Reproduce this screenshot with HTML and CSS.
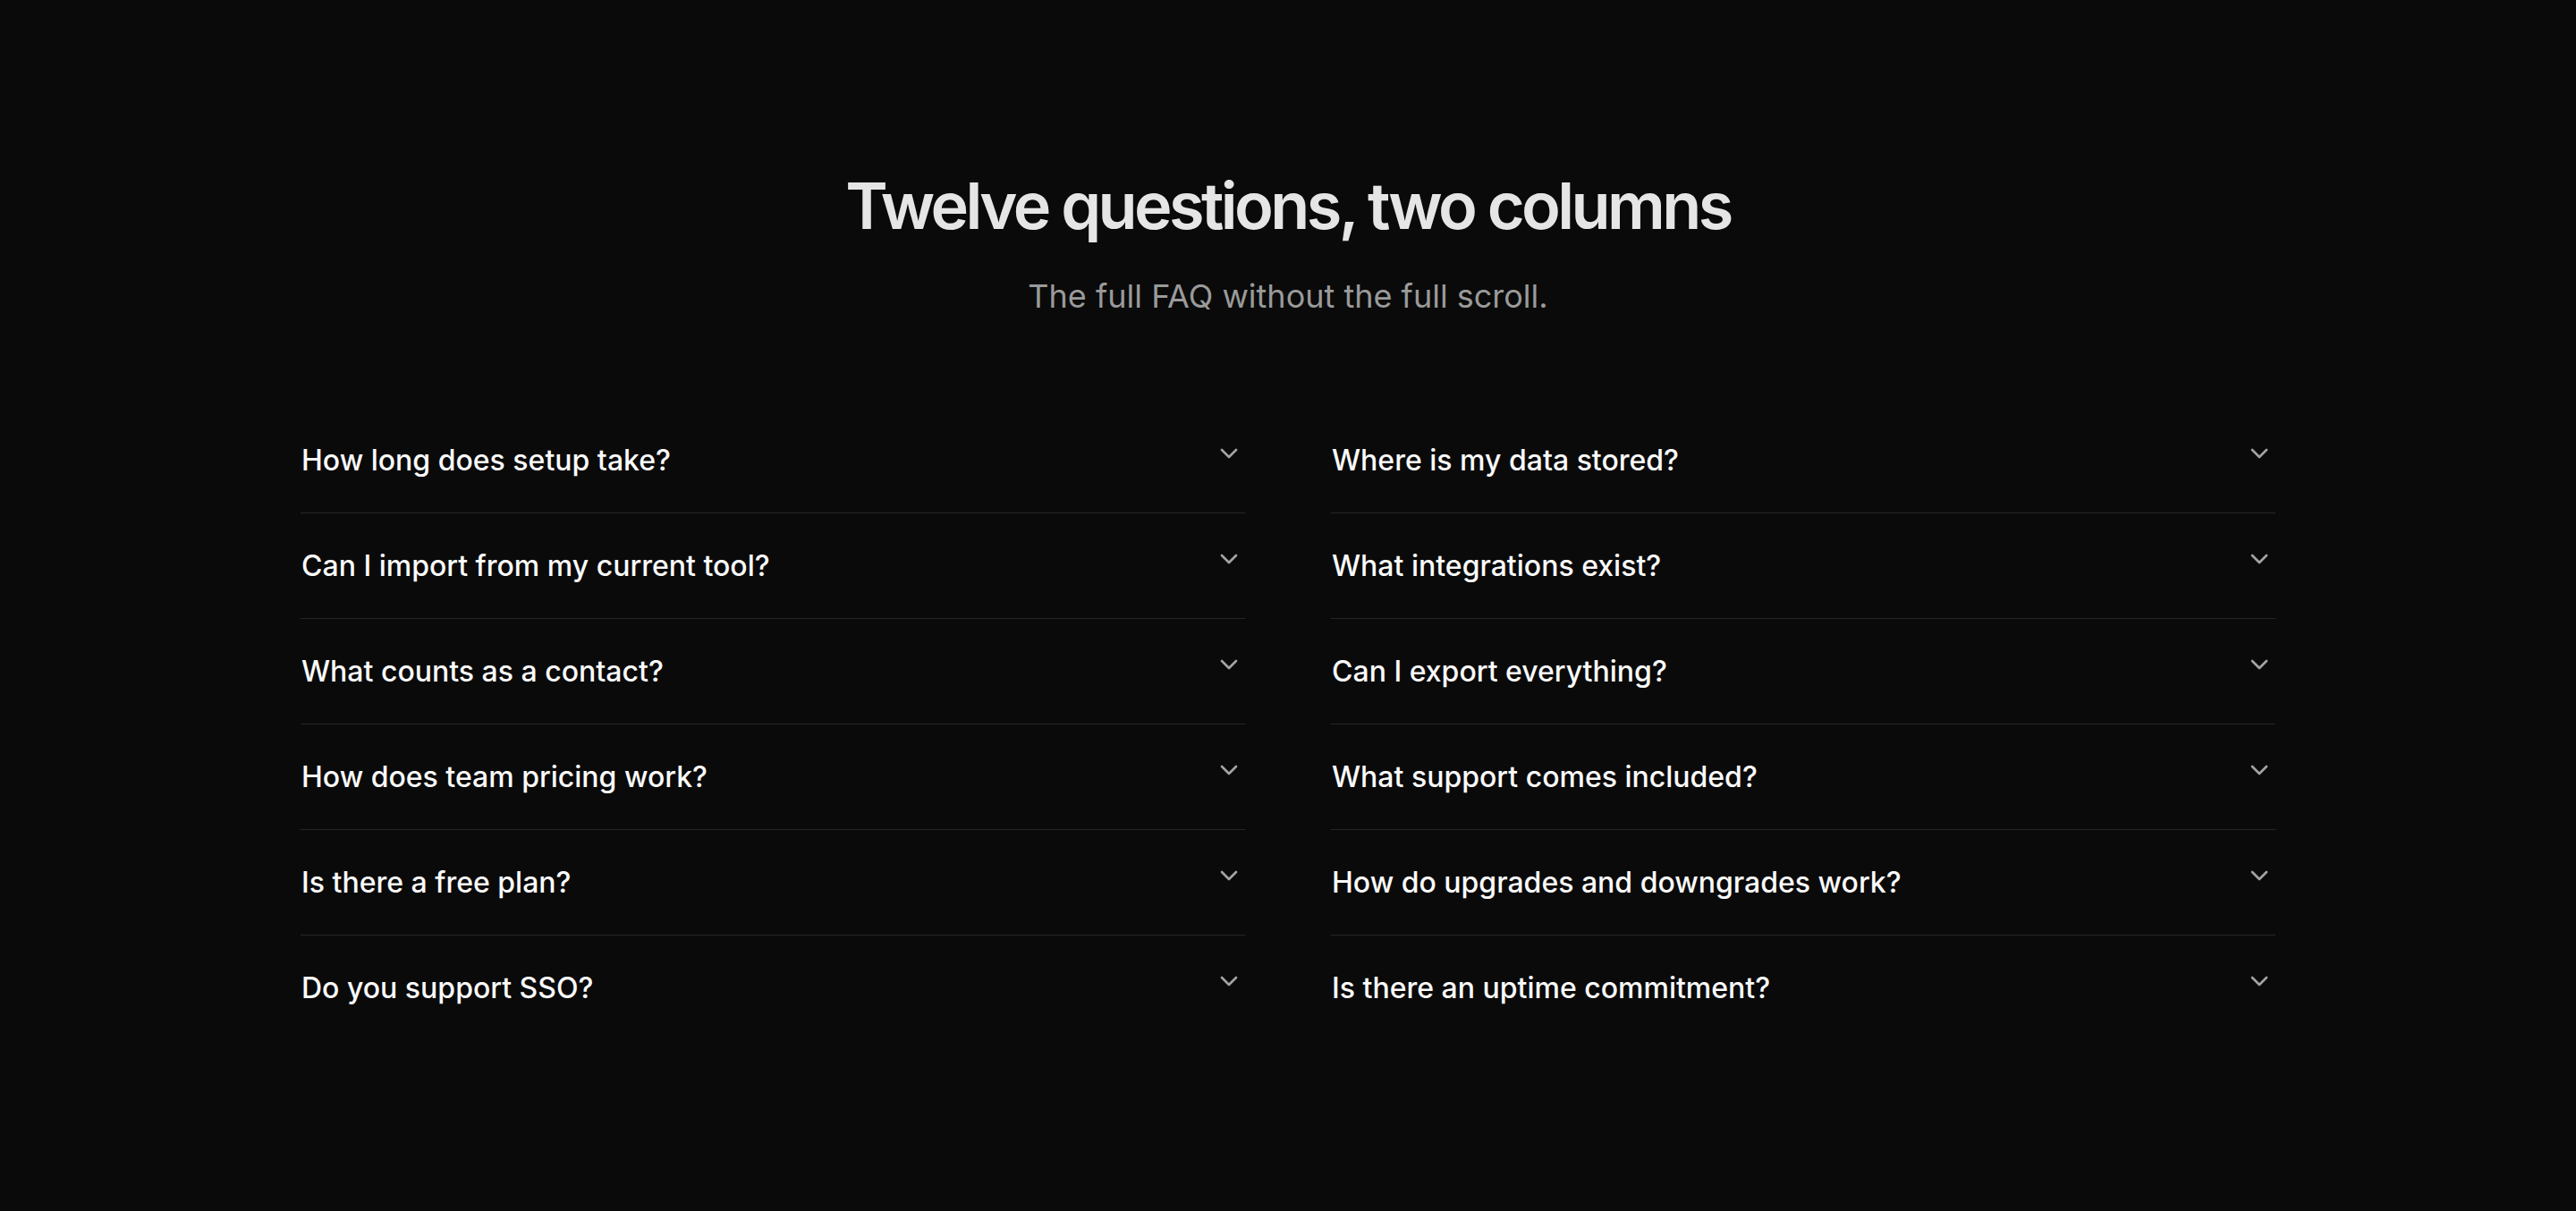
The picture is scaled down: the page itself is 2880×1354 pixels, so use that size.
FILE: index.html
```html
<!DOCTYPE html>
<html lang="en">
<head>
    <meta charset="UTF-8">
    <meta name="viewport" content="width=device-width, initial-scale=1.0">
    <title>FAQ</title>
    <link rel="stylesheet" href="styles.css">
</head>
<body>
    <section class="faq">
        <header class="faq-header">
            <h1>Twelve questions, two columns</h1>
            <p class="subtitle">The full FAQ without the full scroll.</p>
        </header>

        <div class="faq-grid">
            <div class="faq-column">
                <div class="faq-item">
                    <button class="faq-question" type="button" aria-expanded="false">
                        <span>How long does setup take?</span>
                        <svg class="chevron" viewBox="0 0 24 24"><path d="m6 9 6 6 6-6"/></svg>
                    </button>
                </div>
                <div class="faq-item">
                    <button class="faq-question" type="button" aria-expanded="false">
                        <span>Can I import from my current tool?</span>
                        <svg class="chevron" viewBox="0 0 24 24"><path d="m6 9 6 6 6-6"/></svg>
                    </button>
                </div>
                <div class="faq-item">
                    <button class="faq-question" type="button" aria-expanded="false">
                        <span>What counts as a contact?</span>
                        <svg class="chevron" viewBox="0 0 24 24"><path d="m6 9 6 6 6-6"/></svg>
                    </button>
                </div>
                <div class="faq-item">
                    <button class="faq-question" type="button" aria-expanded="false">
                        <span>How does team pricing work?</span>
                        <svg class="chevron" viewBox="0 0 24 24"><path d="m6 9 6 6 6-6"/></svg>
                    </button>
                </div>
                <div class="faq-item">
                    <button class="faq-question" type="button" aria-expanded="false">
                        <span>Is there a free plan?</span>
                        <svg class="chevron" viewBox="0 0 24 24"><path d="m6 9 6 6 6-6"/></svg>
                    </button>
                </div>
                <div class="faq-item">
                    <button class="faq-question" type="button" aria-expanded="false">
                        <span>Do you support SSO?</span>
                        <svg class="chevron" viewBox="0 0 24 24"><path d="m6 9 6 6 6-6"/></svg>
                    </button>
                </div>
            </div>

            <div class="faq-column">
                <div class="faq-item">
                    <button class="faq-question" type="button" aria-expanded="false">
                        <span>Where is my data stored?</span>
                        <svg class="chevron" viewBox="0 0 24 24"><path d="m6 9 6 6 6-6"/></svg>
                    </button>
                </div>
                <div class="faq-item">
                    <button class="faq-question" type="button" aria-expanded="false">
                        <span>What integrations exist?</span>
                        <svg class="chevron" viewBox="0 0 24 24"><path d="m6 9 6 6 6-6"/></svg>
                    </button>
                </div>
                <div class="faq-item">
                    <button class="faq-question" type="button" aria-expanded="false">
                        <span>Can I export everything?</span>
                        <svg class="chevron" viewBox="0 0 24 24"><path d="m6 9 6 6 6-6"/></svg>
                    </button>
                </div>
                <div class="faq-item">
                    <button class="faq-question" type="button" aria-expanded="false">
                        <span>What support comes included?</span>
                        <svg class="chevron" viewBox="0 0 24 24"><path d="m6 9 6 6 6-6"/></svg>
                    </button>
                </div>
                <div class="faq-item">
                    <button class="faq-question" type="button" aria-expanded="false">
                        <span>How do upgrades and downgrades work?</span>
                        <svg class="chevron" viewBox="0 0 24 24"><path d="m6 9 6 6 6-6"/></svg>
                    </button>
                </div>
                <div class="faq-item">
                    <button class="faq-question" type="button" aria-expanded="false">
                        <span>Is there an uptime commitment?</span>
                        <svg class="chevron" viewBox="0 0 24 24"><path d="m6 9 6 6 6-6"/></svg>
                    </button>
                </div>
            </div>
        </div>
    </section>
</body>
</html>
```

FILE: styles.css
```css
* {
    margin: 0;
    padding: 0;
    box-sizing: border-box;
}

body {
    font-family: Inter, 'Noto Sans', sans-serif;
    background: #0a0a0a;
    color: #fafafa;
    min-height: 100vh;
}

.faq {
    padding: 190px 0 120px;
}

.faq-header {
    text-align: center;
}

h1 {
    color: #e5e5e5;
    font-size: 72px;
    line-height: 1.1;
    font-weight: 600;
    letter-spacing: -0.05em;
}

.subtitle {
    margin-top: 35px;
    color: #9a9a9a;
    font-size: 36px;
    line-height: 1.5;
}

.faq-grid {
    max-width: 2208px;
    margin: 98px auto 0;
    display: grid;
    grid-template-columns: 1fr 1fr;
    gap: 96px;
}

.faq-item {
    border-bottom: 1px solid #262626;
}

.faq-item:last-child {
    border-bottom: none;
}

.faq-question {
    width: 100%;
    display: flex;
    align-items: flex-start;
    justify-content: space-between;
    gap: 24px;
    padding: 34.5px 0 34.5px 1px;
    background: none;
    border: none;
    color: #fafafa;
    font-family: inherit;
    font-size: 32px;
    line-height: 48px;
    font-weight: 500;
    text-align: left;
    cursor: pointer;
}

.chevron {
    flex-shrink: 0;
    width: 32px;
    height: 32px;
    margin-right: 2px;
    fill: none;
    stroke: #a3a3a3;
    stroke-width: 2;
    stroke-linecap: round;
    stroke-linejoin: round;
}
```
